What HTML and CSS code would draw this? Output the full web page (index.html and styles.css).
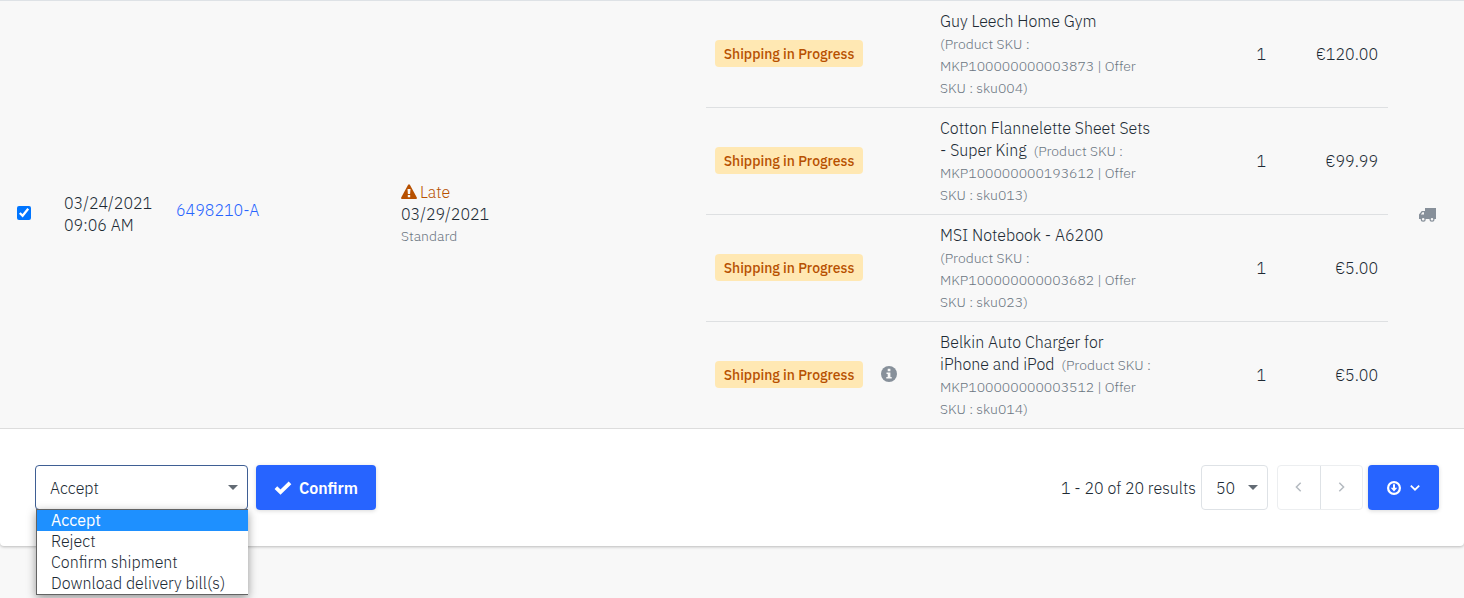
FILE: index.html
```html
<!DOCTYPE html>
<html lang="en">
<head>
<meta charset="utf-8">
<meta name="viewport" content="width=device-width, initial-scale=1">
<title>Orders</title>
<link rel="stylesheet" href="styles.css">
</head>
<body>
<main class="card">
  <table class="orders">
    <colgroup><col class="col-check"><col class="col-date"><col class="col-id"><col><col class="col-lines"><col class="col-carrier"></colgroup>
    <tbody>
      <tr>
        <td class="check-cell"><input class="check" type="checkbox" aria-label="Select order 6498210-A" checked></td>
        <td class="date-cell">03/24/2021<br>09:06 AM</td>
        <td class="id-cell"><a class="order-link" href="#">6498210-A</a></td>
        <td class="date-cell">
          <div class="late"><svg width="16" height="16" viewBox="0 0 16 16" aria-hidden="true"><path fill="currentColor" fill-rule="evenodd" d="M7 1q1-1.600 2 0l6.800 12.500Q16.300 15 15 15H1Q-.3 15 .2 13.500zM6.500 5l.4 5h2.200l.4-5zM6.800 11v2.300h2.400V11z"/></svg>Late</div>
          <div>03/29/2021</div>
          <div class="muted">Standard</div>
        </td>
        <td class="lines-cell">
          <table class="lines">
            <colgroup><col class="col-status"><col class="col-info"><col><col class="col-qty"><col class="col-price"></colgroup>
            <tbody>
              <tr>
                <td class="status"><span class="badge">Shipping in Progress</span></td><td></td>
                <td>Guy Leech Home Gym<br><span class="muted">(Product SKU :<br>MKP100000000003873 | Offer<br>SKU : sku004)</span></td>
                <td class="num">1</td><td class="num">€120.00</td>
              </tr>
              <tr>
                <td class="status"><span class="badge">Shipping in Progress</span></td><td></td>
                <td>Cotton Flannelette Sheet Sets<br>- Super King <span class="muted inline">(Product SKU :<br></span><span class="muted">MKP100000000193612 | Offer<br>SKU : sku013)</span></td>
                <td class="num">1</td><td class="num">€99.99</td>
              </tr>
              <tr>
                <td class="status"><span class="badge">Shipping in Progress</span></td><td></td>
                <td>MSI Notebook - A6200<br><span class="muted">(Product SKU :<br>MKP100000000003682 | Offer<br>SKU : sku023)</span></td>
                <td class="num">1</td><td class="num">€5.00</td>
              </tr>
              <tr>
                <td class="status"><span class="badge">Shipping in Progress</span></td>
                <td class="status"><svg class="info" width="16" height="16" viewBox="0 0 16 16" role="img" aria-label="Information"><circle cx="8" cy="8" r="8" fill="#87909a"/><path fill="#f8f8f8" d="M6.700 2.800h2.700v2.400H6.700zM5.500 6.400h3.900v4.500h1.300v1.700H5.300v-1.700h1.400V8H5.500z"/></svg></td>
                <td>Belkin Auto Charger for<br>iPhone and iPod <span class="muted inline">(Product SKU :<br></span><span class="muted">MKP100000000003512 | Offer<br>SKU : sku014)</span></td>
                <td class="num">1</td><td class="num">€5.00</td>
              </tr>
            </tbody>
          </table>
        </td>
        <td class="carrier-cell"><svg class="truck" width="17" height="14" viewBox="0 0 17 14" role="img" aria-label="Shipment"><path fill="#87909a" fill-rule="evenodd" d="M6 0h11v11H0V6.500L2.800 3H6zM1.800 6.500H5V4.300H3.500z"/><g fill="#f8f8f8" stroke="#87909a" stroke-width="1.200"><circle cx="4.200" cy="11.300" r="1.900"/><circle cx="13" cy="11.300" r="1.900"/></g></svg></td>
      </tr>
    </tbody>
  </table>
  <footer class="toolbar">
    <div class="action">
      <select class="select action-select" aria-label="Action"><option>Accept</option><option>Reject</option><option>Confirm shipment</option><option>Download delivery bill(s)</option></select>
      <ul class="menu" role="listbox" aria-label="Action options">
        <li class="menu-item active" role="option" aria-selected="true">Accept</li>
        <li class="menu-item" role="option">Reject</li>
        <li class="menu-item" role="option">Confirm shipment</li>
        <li class="menu-item" role="option">Download delivery bill(s)</li>
      </ul>
    </div>
    <button class="button confirm" type="button"><svg width="18" height="14" viewBox="0 0 18 14" aria-hidden="true"><path fill="none" stroke="#fff" stroke-width="3.800" d="M1.900 6.700l4.600 4.500L16 1.800"/></svg>Confirm</button>
    <div class="paging">
      <label for="page-size">1 - 20 of 20 results</label>
      <select class="select size-select" id="page-size"><option>50</option></select>
      <div class="pager">
        <button class="page" type="button" aria-label="Previous page" disabled><svg width="7" height="10" viewBox="0 0 7 10"><path fill="none" stroke="#b4bac0" stroke-width="1.500" d="M5.700 .7L1.400 5l4.300 4.300"/></svg></button>
        <button class="page" type="button" aria-label="Next page" disabled><svg width="7" height="10" viewBox="0 0 7 10"><path fill="none" stroke="#b4bac0" stroke-width="1.500" d="M1.300 .7L5.600 5 1.300 9.300"/></svg></button>
      </div>
      <button class="button export" type="button" aria-label="Export"><svg width="14" height="14" viewBox="0 0 14 14"><circle cx="7" cy="7" r="5.900" fill="none" stroke="#fff" stroke-width="2.200"/><path fill="#fff" d="M6 3.200h2v3.500h2.300L7 10.400 3.700 6.700H6z"/></svg><svg width="10" height="6" viewBox="0 0 10 6"><path fill="none" stroke="#fff" stroke-width="1.800" d="M.8.700L5 4.700 9.200.7"/></svg></button>
    </div>
  </footer>
</main>
</body>
</html>
```
FILE: styles.css
```css
* { box-sizing: border-box; }
body {
  min-height: 100vh;
  margin: 0;
  background: #f8f8f8;
  color: #202a34;
  font: 300 16px/22px "IBM Plex Sans", Roboto, sans-serif;
}
.card {
  background: #fff;
  border-radius: 0 0 4px 4px;
  box-shadow: 0 1px 3px rgba(0, 0, 0, .25);
}
table { width: 100%; border-collapse: separate; border-spacing: 0; table-layout: fixed; }
.orders { background: #f8f8f8; border-top: 1px solid #dee2e6; border-bottom: 1px solid #ddd; }
.orders td { padding: 0 0 0 16px; vertical-align: middle; white-space: nowrap; }
.col-check { width: 48px; }
.col-date { width: 112px; }
.col-id { width: 225px; }
.col-lines { width: 682px; }
.col-carrier { width: 76px; }
.check { display: block; width: 14px; height: 14px; margin: 0 0 0 1px; accent-color: #0075ff; }
.orders .date-cell { padding-bottom: 1px; }
.orders .id-cell { padding-bottom: 10px; }
.orders .check-cell { padding-bottom: 3px; }
.order-link { color: #2764ff; text-decoration: none; }
.late { display: flex; align-items: center; gap: 3px; color: #b75000; }
.muted { color: #6b7682; font-size: 14px; }
span.muted { line-height: 20px; }
.inline { margin-left: 3px; }
.orders .lines-cell { padding: 0; }
.orders .lines td { padding: 9px; border-bottom: 1px solid #dee0e2; }
.orders .lines tr:last-child td { border-bottom: 0; }
.col-status { width: 166px; }
.col-info { width: 59px; }
.col-qty { width: 110px; }
.col-price { width: 112px; }
.orders .lines td.num { padding-right: 10px; text-align: right; }
.orders .lines td.status { padding-bottom: 11px; }
.badge {
  display: block;
  width: 148px;
  padding: 3px 0 2px;
  border-radius: 4px;
  background: #ffe8b3;
  color: #b75000;
  font-size: 14px;
  font-weight: 500;
  text-align: center;
}
.info { display: block; }
.orders .carrier-cell { padding: 0 0 0 31px; }
.truck { display: block; }
.toolbar { display: flex; gap: 8px; padding: 36px 25px 36px 35px; }
.action { position: relative; width: 213px; }
.select {
  appearance: none;
  height: 45px;
  padding: 1px 14px 0;
  border: 1px solid #dee2e6;
  border-radius: 4px;
  background: #fff url("data:image/svg+xml,%3Csvg xmlns='http://www.w3.org/2000/svg' width='10' height='5'%3E%3Cpath fill='%23636b74' d='M0 0h10L5 5z'/%3E%3C/svg%3E") no-repeat right 9px center;
  color: inherit;
  font: inherit;
}
.action-select { width: 100%; border-color: #3f5f94; }
.menu {
  position: absolute;
  top: 44px;
  right: 0;
  left: 1px;
  z-index: 1;
  margin: 0;
  padding: 0;
  border: 1px solid #636363;
  border-right: 0;
  background: #fff;
  box-shadow: 0 3px 9px rgba(0, 0, 0, .4);
  list-style: none;
}
.menu-item { height: 21px; padding-left: 14px; line-height: 21px; }
.active { background: #1e90ff; color: #fff; font-weight: 400; }
.button {
  display: flex;
  align-items: center;
  justify-content: center;
  height: 45px;
  padding: 0;
  border: 0;
  border-radius: 4px;
  background: #2764ff;
  box-shadow: 0 1px 4px rgba(0, 0, 0, .15);
  color: #fff;
  font: inherit;
  font-weight: 600;
}
.confirm { gap: 7px; width: 120px; }
.export { gap: 9px; width: 71px; }
.paging { display: flex; align-items: center; gap: 5px; margin-left: auto; }
.size-select { width: 67px; }
.pager { display: flex; width: 86px; height: 45px; margin-left: 4px; border: 1px solid #eceef0; border-radius: 4px; }
.page { flex: 1; padding: 0; border: 0; background: none; }
.page + .page { border-left: 1px solid #dee2e6; }
```
